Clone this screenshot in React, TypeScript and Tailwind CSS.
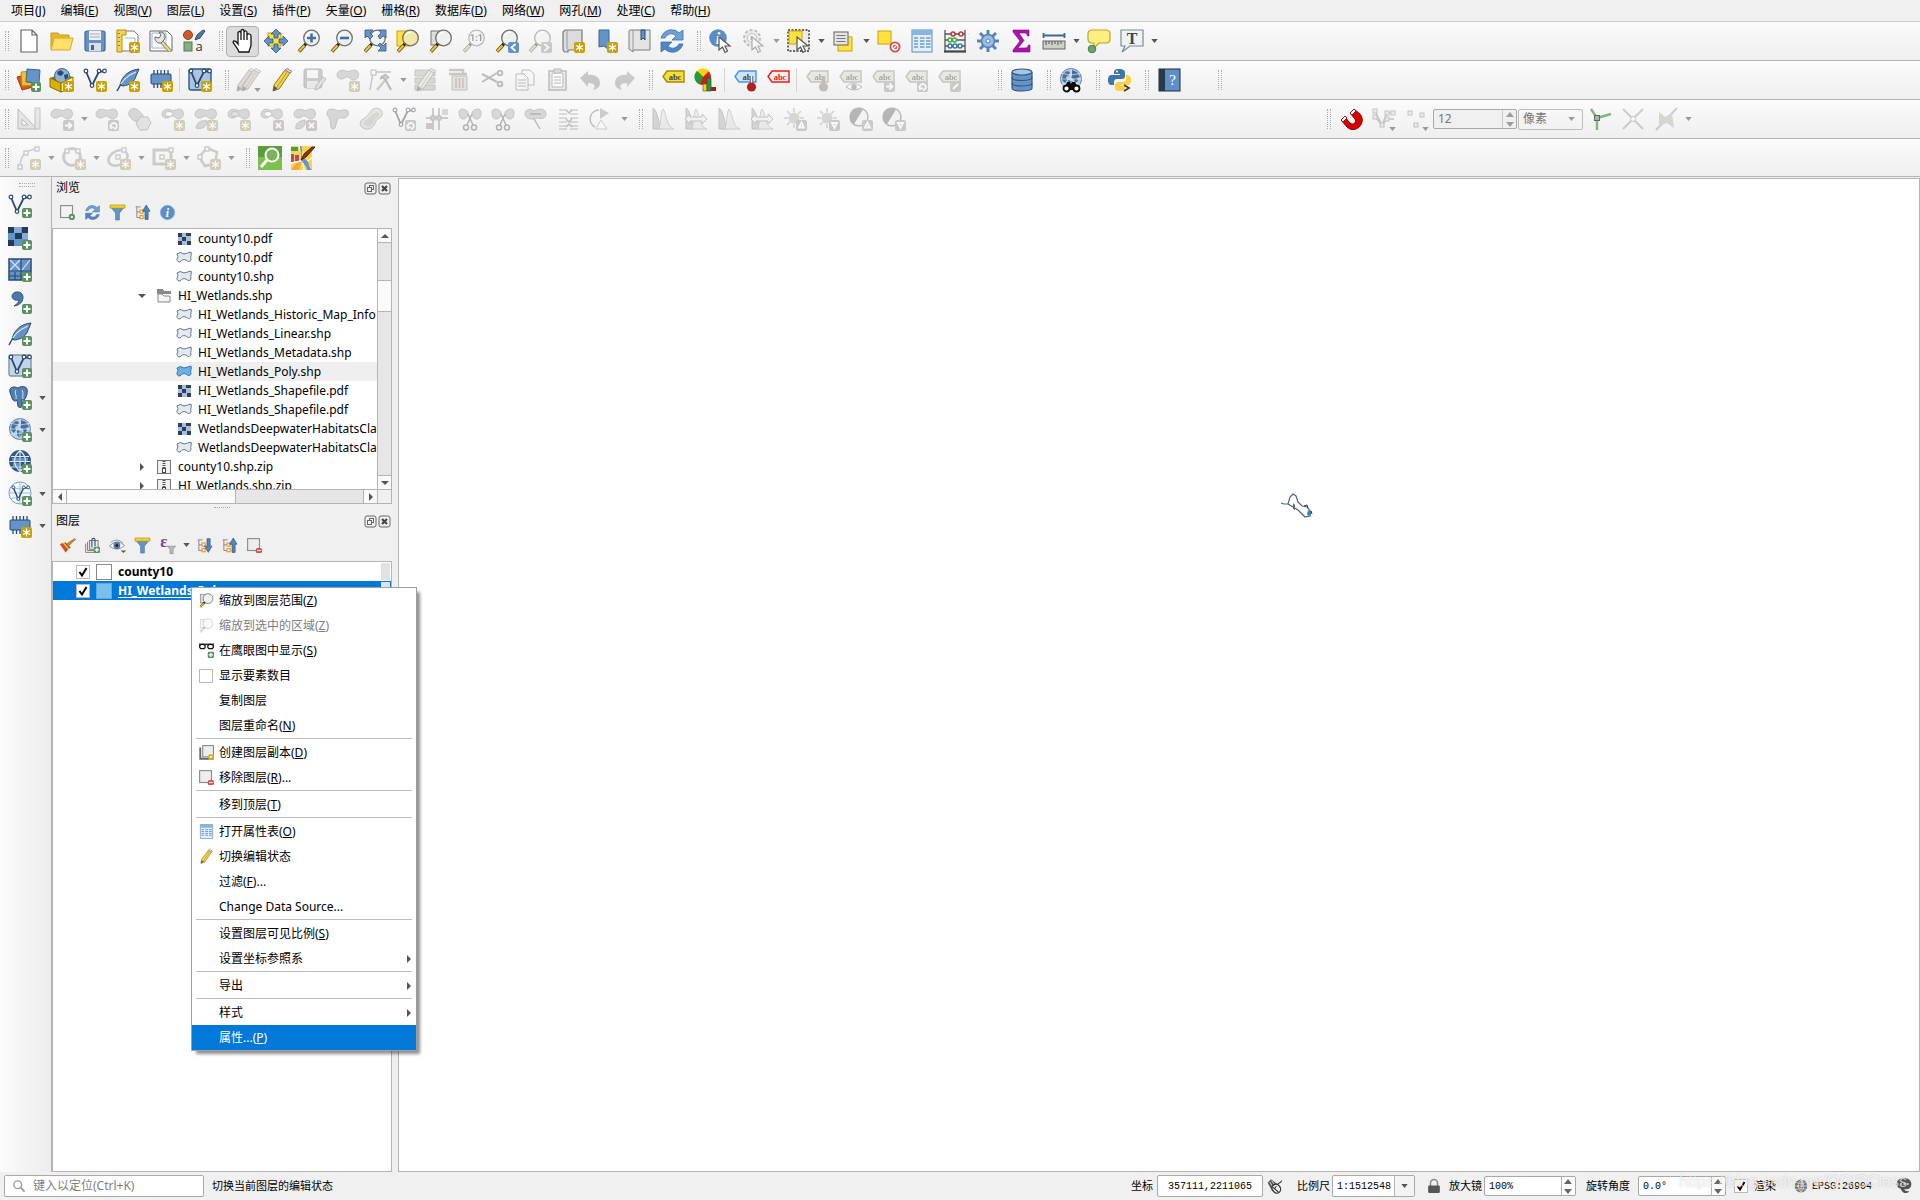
import { ReactNode } from 'react';

const BLUE = '#6493c8';
const NAVY = '#2b4a6f';

/* ---------- badges and shared icon parts, all on a 24 x 24 grid ---------- */

const Star = () => (
  <g>
    <rect x="13" y="13" width="11" height="11" rx="2" fill="#c8a208" />
    <path d="M18.5 14.5v8M15 16.5l7 4M15 20.5l7-4" stroke="#fff" strokeWidth="1.3" />
    <circle cx="18.5" cy="18.5" r="1.5" fill="#fff" />
  </g>
);

const Plus = () => (
  <g>
    <rect x="14" y="14" width="10" height="10" rx="2" fill="#5a9160" />
    <path d="M19 15.5v7M15.5 19h7" stroke="#fff" strokeWidth="2" />
  </g>
);

const Badge = ({ d, fill = '#8f9a8f' }: { d: string; fill?: string }) => (
  <g>
    <rect x="13" y="13" width="11" height="11" rx="2" fill={fill} />
    <path d={d} stroke="#fff" strokeWidth="1.8" fill="none" />
  </g>
);

const ARROW_R = 'M15 18.5h6M18.5 15.5l3 3-3 3';
const ROTATE = 'M16 20a3 3 0 1 1 3 2M15 18l1 3 3-1';
const CROSS = 'M16 16l5 5M21 16l-5 5';

const Lens = ({ fill = '#eef1ee' }: { fill?: string }) => (
  <g>
    <path d="M9.5 14L7 17" stroke="#222" strokeWidth="3" />
    <path d="M7.5 16.5L2 22.5" stroke="#6b5510" strokeWidth="3.6" />
    <path d="M7.5 16.5L2.3 22.2" stroke="#f2c53c" strokeWidth="2" />
    <circle cx="14.5" cy="9" r="7.8" fill={fill} stroke="#6d706d" strokeWidth="1.3" />
    <path d="M9.5 7a5 5 0 0 1 5-3.5" stroke="#fff" strokeWidth="1.5" fill="none" />
  </g>
);

const Cursor = () => (
  <path d="M10 8v13l3.5-3 2.5 5.500 2.500-1.500-2.500-5h5z" fill="#fff" stroke="#555" strokeWidth="1.2" />
);

const Blob = () => (
  <path d="M1 7c0-4 5-6 9-4s7-3 11 0c3 3 1 9-3 9s-3-2-6-3-3 2-6 2-5-1-5-4z" fill="#aab5aa" stroke="#7f8a7f" />
);

const VLine = () => (
  <g fill="#fff" stroke={NAVY} strokeWidth="1.2">
    <path d="M3 3.5l6 14L16 3.5h5" fill="none" strokeWidth="1.8" />
    <circle cx="3" cy="3" r="1.8" />
    <circle cx="9" cy="17.5" r="1.8" />
    <circle cx="16" cy="3" r="1.8" />
    <circle cx="21.5" cy="3" r="1.8" />
  </g>
);

const Feather = () => (
  <g>
    <path d="M23 1C13 2 6 8 4 17l3 1c7-1 12-5 13-10l3-7z" fill={BLUE} stroke={NAVY} />
    <path d="M1 23C4 15 10 8 20 4" stroke="#dfe9f4" strokeWidth="1.2" fill="none" />
    <path d="M1 23l4-7" stroke={NAVY} strokeWidth="1.5" />
  </g>
);

const Chip = () => (
  <g>
    <path d="M5 2v18M8.5 2v18M12 2v18M15.5 2v18M19 2v18" stroke={NAVY} strokeWidth="1.3" />
    <rect x="2" y="6" width="20" height="10" rx="1" fill={BLUE} stroke={NAVY} />
  </g>
);

const Globe = () => (
  <g>
    <circle cx="12" cy="11" r="10.5" fill="#b7cfe6" stroke="#5d7fa5" />
    <path
      d="M4 6l4-3 3 1-1 3-3 2 1 3-2 3-3-3zM13 2l5 2 3 5-3 1 1 3-3 2-1-4-3-1 1-3zM9 12l4 1 1 3-2 4-3-3z"
      fill="#476f9c"
    />
    <path d="M1.500 11h21M12 .5v21M3 5.5q9 3 18 0M3 16.5q9-3 18 0" stroke="#dfeaf5" strokeWidth=".7" fill="none" />
  </g>
);

const Grid = () => (
  <g>
    <circle cx="12" cy="11" r="11" fill="#31567f" />
    <path d="M4 8h7v3H4zM13 8h7v3h-7zM5 13h6v3H5z" fill={BLUE} />
    <path
      d="M12 .5v21M1.5 11.5h21M3 6.5h18M3 17h18M12 .5q-11 10 0 21M12 .5q11 10 0 21"
      stroke="#dfeaf5"
      strokeWidth="1.2"
      fill="none"
    />
  </g>
);

const PencilShape = ({ fill = '#f0d14c' }: { fill?: string }) => (
  <g>
    <path d="M15 2l5 3-11 16-6 2 1-6z" fill={fill} stroke="#8d7a1f" />
    <path d="M17.5 3.5L6.5 20" stroke="#b99a23" />
    <path d="M15 2l2-1.5 5 3L20 5z" fill="#ddd" stroke="#888" />
    <path d="M4 18l3.5 2.5L3 23z" fill="#555" />
  </g>
);

const Tag = ({ fill = '#dcd8b8', stroke = '#8c8a74', text = 'abc', color = '#444' }) => (
  <g>
    <path d="M6 3h17v11H6L2 8.5z" fill={fill} stroke={stroke} strokeWidth="1.4" />
    <text x="14" y="11.5" textAnchor="middle" fontSize="8.5" fontWeight="bold" fontFamily="Liberation Serif, serif" fill={color}>
      {text}
    </text>
  </g>
);

const Refresh = () => (
  <g>
    <path d="M1 9C3 3 8 0 13 1c3 0 5 2 6 3l4-3v10H12l4-4c-4-4-9-2-11 2z" fill="#6ea0d4" stroke="#3c71ad" strokeWidth=".8" />
    <path d="M23 15c-2 6-7 9-12 8-3 0-5-2-6-3l-4 3V13h11l-4 4c4 4 9 2 11-2z" fill="#4e86c2" stroke="#3c71ad" strokeWidth=".8" />
  </g>
);

const Raster = () => (
  <g>
    <rect x="0" y="1" width="20" height="19" fill={BLUE} />
    <path d="M0 1h6v6H0zM14 1h6v6h-6zM7 7h7v6H7zM0 14h6v6H0z" fill="#233b5b" />
    <path d="M14 7h6v6h-6zM6 1h7v6H6z" fill="#86abd6" />
  </g>
);

const Histogram = () => (
  <g>
    <path d="M2 22V1c4 2 5 12 8 21z" fill="#9fb79f" stroke="#7c8a7c" />
    <path d="M8 22c2-8 2-18 4-20 3 2 3 18 11 20z" fill="#e3dede" stroke="#a99" />
  </g>
);

const Scissors = () => (
  <g>
    <path
      d="M1 5c0-4 6-4 9 0 0 5-2 7-5 7S1 9 1 5zM23 5c0-4-6-4-9 0 0 5 2 7 5 7s4-3 4-7z"
      fill="#aab5aa"
      stroke="#7f8a7f"
    />
    <path d="M10 7l5 11M14 7L9 18" stroke="#666" strokeWidth="1.5" />
    <circle cx="8" cy="20.5" r="2.5" fill="none" stroke="#666" strokeWidth="1.5" />
    <circle cx="16" cy="20.5" r="2.5" fill="none" stroke="#666" strokeWidth="1.5" />
  </g>
);

const Tree = () => (
  <g>
    <path d="M1 3h8M3 3v17h5M3 11h5" stroke="#8a8a8a" strokeWidth="1.6" fill="none" />
    <rect x="8" y="8" width="5" height="5" fill="#fff" stroke="#f09020" strokeWidth="1.8" />
    <rect x="8" y="17" width="5" height="5" fill="#fff" stroke="#f09020" strokeWidth="1.8" />
  </g>
);

const Sun = () => (
  <g>
    <path d="M11 1v4M11 17v4M1 11h4M17 11h4M4 4l3 3M18 4l-3 3M4 18l3-3" stroke="#a8a58a" strokeWidth="1.5" />
    <circle cx="11" cy="11" r="5.5" fill="#b7b48f" />
  </g>
);

const Contrast = () => (
  <g>
    <circle cx="10" cy="10" r="9" fill="#f1f1f1" stroke="#777" strokeWidth="1.5" />
    <path d="M14 2.5A8.5 8.5 0 1 0 5 17z" fill="#666" />
  </g>
);

const icons: Record<string, ReactNode> = {
  newFile: <path d="M4 1h11l5 5v17H4zM15 1v5h5" fill="#fff" stroke="#666" strokeWidth="1.2" />,
  open: (
    <g>
      <path d="M1 20V4h7l2 2h9v4" fill="#e8b92c" stroke="#c99a1b" />
      <path d="M1 21L4 9h19l-3 12z" fill="#ffe06a" stroke="#d3a827" />
    </g>
  ),
  save: (
    <g>
      <rect x="2" y="2" width="20" height="20" rx="2" fill={BLUE} stroke="#3f6695" strokeWidth="1.2" />
      <rect x="6" y="2" width="12" height="9" fill="#eef0f2" />
      <path d="M7 5h10M7 8h10" stroke="#aaa" />
      <rect x="6" y="14" width="12" height="8" fill="#dcdfe2" />
      <rect x="8" y="16" width="3" height="5" fill="#3f6695" />
    </g>
  ),
  layout: (
    <g>
      <path d="M3 2h15l4 4v16H3z" fill="#fff" stroke="#777" />
      <path d="M1 1h9v5H6v17H1z" fill="#f3d24d" stroke="#b58f10" />
      <path d="M3 4v1M3 8v1M3 12v1M3 16v1" stroke="#8a6d00" strokeWidth="1.5" />
      <path d="M9 9h10v9" stroke="#9bb" fill="none" />
      <Star />
    </g>
  ),
  layoutManager: (
    <g>
      <path d="M1 2h17l5 5v15H1z" fill="#fff" stroke="#666" />
      <path d="M3 4h14v15H3z" fill="none" stroke="#9ab3dd" />
      <path d="M12 12l9 10" stroke="#8d8d5a" strokeWidth="4" />
      <path d="M12 12l9 10" stroke="#e6dd8c" strokeWidth="2" />
      <path d="M6 8l4 1 2-3-2-3a5 5 0 0 1 5 8l-3 3a5 5 0 0 1-6-6z" fill="#e3e3e3" stroke="#666" />
    </g>
  ),
  style: (
    <g>
      <circle cx="6" cy="6" r="4.5" fill="#cc5a2c" stroke="#9b3b17" />
      <path d="M13 11l2-5 6-5 2 1-5 7z" fill="#4e79ad" stroke="#2b4a6f" />
      <rect x="2" y="13" width="8" height="9" fill="#85ae85" stroke="#527a52" />
      <text x="17" y="22" textAnchor="middle" fontSize="13" fontFamily="Open Sans, sans-serif" fill="#333">
        a
      </text>
    </g>
  ),
  hand: (
    <path
      d="M8 23c-1-4-5-7-6-10 1-2 3-1 5 2V4c0-2 3-2 3 0V2c0-2 3-2 3 0v1c1-2 3-1 3 1v2c1-2 4-1 4 1v9c0 3-2 4-2 7zM10 4v7M13 3v8M16 5v6"
      fill="#fff"
      stroke="#111"
      strokeWidth="1.3"
    />
  ),
  pan: (
    <g>
      <rect x="4" y="4" width="13" height="13" fill="#ffe23e" stroke="#c8a208" />
      <path
        d="M12 0l5 5h-3v4h-4V5H7zM12 24l5-5h-3v-4h-4v4H7zM0 12l5-5v3h4v4H5v3zM24 12l-5-5v3h-4v4h4v3z"
        fill={BLUE}
        stroke="#31567f"
        strokeWidth=".8"
      />
    </g>
  ),
  zoomIn: (
    <g>
      <Lens />
      <path d="M14.5 4.5v9M10 9h9" stroke="#3c71ad" strokeWidth="2.6" />
    </g>
  ),
  zoomOut: (
    <g>
      <Lens />
      <path d="M10 9h9" stroke="#3c71ad" strokeWidth="2.6" />
    </g>
  ),
  zoomFull: (
    <g>
      <Lens />
      <path
        d="M2 1h8L7 4l3 3-3 3-3-3-2 2zM23 1v8l-3-2-3 3-2-3 3-3-2-3zM23 22h-8l3-3-3-3 2-2 3 3 3-3z"
        fill={BLUE}
        stroke="#31567f"
        strokeWidth=".8"
      />
    </g>
  ),
  zoomSelection: (
    <g>
      <rect x="1" y="2" width="12" height="15" fill="#ffe23e" stroke="#c8a208" />
      <Lens fill="#f1eaa6" />
    </g>
  ),
  zoomLayer: (
    <g>
      <rect x="2" y="2" width="11" height="14" fill="#ddd" stroke="#777" />
      <Lens />
    </g>
  ),
  zoomNative: (
    <g>
      <Lens />
      <text x="14.5" y="12" textAnchor="middle" fontSize="9" fontWeight="bold" fontFamily="Roboto, sans-serif" fill="#333">
        1:1
      </text>
    </g>
  ),
  zoomLast: (
    <g>
      <Lens />
      <Badge fill={BLUE} d="M20.5 15l-4 3.5 4 3.5" />
    </g>
  ),
  zoomNext: (
    <g>
      <Lens />
      <Badge d="M16.5 15l4 3.5-4 3.5" />
    </g>
  ),
  mapView: (
    <g>
      <path d="M4 1h17v20H7v2H4a3 3 0 0 1-2-3V3z" fill="#dcdcdc" stroke="#7a7a7a" strokeWidth="1.2" />
      <path d="M6 1v19" stroke="#999" />
      <Star />
    </g>
  ),
  bookmarkNew: (
    <g>
      <path d="M5 1h10v20l-5-4-5 1z" fill={BLUE} stroke="#3f6695" />
      <Star />
    </g>
  ),
  bookmarks: (
    <g>
      <path d="M3 1h20v20H6v2L2 20V2z" fill="#e4e4e4" stroke="#7a7a7a" />
      <path d="M6 1v20" stroke="#999" />
      <path d="M14 1h4v10l-2-2-2 2z" fill={BLUE} stroke={NAVY} />
    </g>
  ),
  refresh: <Refresh />,
  identify: (
    <g>
      <circle cx="9" cy="9" r="8.8" fill="#5c8ec6" />
      <text x="9" y="14.5" textAnchor="middle" fontSize="16" fontStyle="italic" fontWeight="bold" fontFamily="Liberation Serif, serif" fill="#fff">
        i
      </text>
      <Cursor />
    </g>
  ),
  action: (
    <g>
      <circle cx="10" cy="9" r="8" fill="#ddd" stroke="#777" strokeWidth="2" strokeDasharray="3 2" />
      <circle cx="10" cy="9" r="4.5" fill="#fff" stroke="#777" />
      <path d="M8.5 6.5l4 2.5-4 2.5z" fill="#666" />
      <Cursor />
    </g>
  ),
  select: (
    <g>
      <rect x="1" y="1" width="21" height="21" fill="#ececec" stroke="#333" strokeWidth="1.4" strokeDasharray="2 1.5" />
      <rect x="2" y="2" width="13" height="13" fill="#ffe23e" stroke="#c8a208" />
      <Cursor />
    </g>
  ),
  selectForm: (
    <g>
      <rect x="6" y="8" width="14" height="14" fill="#ffe23e" stroke="#c8a208" />
      <rect x="2" y="3" width="14" height="13" fill="#e5e5e5" stroke="#777" strokeWidth="1.2" />
      <path d="M4.5 6.5h9M4.5 9.5h9M4.5 12.5h9" stroke="#777" strokeWidth="1.2" />
    </g>
  ),
  deselect: (
    <g>
      <rect x="1" y="2" width="13" height="13" fill="#ffe23e" stroke="#c8a208" />
      <circle cx="18" cy="18" r="5.5" fill="#d84b4b" />
      <circle cx="18" cy="18" r="3" fill="none" stroke="#fff" strokeWidth="1.3" />
      <path d="M16 20l4-4" stroke="#fff" strokeWidth="1.3" />
    </g>
  ),
  table: (
    <g>
      <rect x="2" y="1" width="20" height="22" fill="#e3eefa" stroke="#6f9dcc" strokeWidth="1.2" />
      <rect x="2" y="1" width="20" height="5" fill="#8ab4e0" />
      <path
        d="M4 9h4M10 9h4.5M16 9h4.5M4 12h4M10 12h4.5M16 12h4.5M4 15h4M10 15h4.5M16 15h4.5M4 18h4M10 18h4.5M16 18h4.500"
        stroke="#6f9dcc"
        strokeWidth="1.6"
      />
    </g>
  ),
  abacus: (
    <g>
      <path d="M2 1v21M22 1v21M1 22.5h22M2 5h20M2 11h20M2 17h20" stroke="#555" strokeWidth="1.3" />
      <path d="M1 22.5h22" stroke="#444" strokeWidth="2" />
      <g fill="#fff" strokeWidth="1.5">
        <circle cx="10" cy="5" r="2" stroke="#c33" />
        <circle cx="18" cy="5" r="2" stroke="#c33" />
        <circle cx="7" cy="11" r="2" stroke="#4a4" />
        <circle cx="11.5" cy="11" r="2" stroke="#4a4" />
        <circle cx="7" cy="17" r="2" stroke="#37a" />
        <circle cx="12" cy="17" r="2" stroke="#37a" />
        <circle cx="17" cy="17" r="2" stroke="#37a" />
      </g>
    </g>
  ),
  gear: (
    <g stroke="#5583b9" fill="none">
      <path d="M12 1v22M1 12h22M4 4l16 16M20 4L4 20" strokeWidth="3" />
      <circle cx="12" cy="12" r="6.5" fill="#9dbde2" strokeWidth="1.6" />
      <circle cx="12" cy="12" r="2" fill="#fff" />
    </g>
  ),
  sigma: (
    <path
      d="M4 1h16v6h-1.5C18 4.5 17 4 15 4h-5l5 7.5L9 19h7c2 0 3-1 3.5-3H21v7H4v-2l7-9-7-9z"
      fill="#b010b0"
      stroke="#7d0a7d"
      strokeWidth=".6"
    />
  ),
  ruler: (
    <g>
      <path d="M1 6.5h22M1.5 4v5M22.5 4v5" stroke="#3f6695" strokeWidth="1.8" />
      <rect x="1" y="12" width="22" height="8" fill="#cfcfc6" stroke="#666" />
      <path d="M4 12v4M7 12v3M10 12v4M13 12v3M16 12v4M19 12v3" stroke="#555" />
    </g>
  ),
  tip: (
    <g>
      <path d="M5 1h14q4 0 4 4v5q0 4-4 4h-7l-5 5V14H5q-4 0-4-4V5q0-4 4-4z" fill="#ffef83" stroke="#c2a327" strokeWidth="1.2" />
      <circle cx="5" cy="20" r="3.800" fill="#6ca36c" stroke="#477a47" />
    </g>
  ),
  annotation: (
    <g>
      <path d="M1 1h22v16H10l-8 6 3-6H1z" fill="#eef4f6" stroke="#7a8a92" strokeWidth="1.2" />
      <text x="12" y="14.5" textAnchor="middle" fontSize="16" fontWeight="bold" fontFamily="Liberation Serif, serif" fill="#444">
        T
      </text>
    </g>
  ),
  addLayer: (
    <g>
      <path d="M0 9l12-3 4 13-11 3z" fill="#d4572a" stroke="#9b3b17" />
      <path d="M4 4l13-1v14L5 18z" fill="#f2c020" stroke="#b98a10" />
      <path d="M10 1l13 1-1 13-13-1z" fill={BLUE} stroke="#3f6695" />
      <Plus />
    </g>
  ),
  geopackage: (
    <g>
      <path d="M0 10l11-4 12 3-12 6z" fill="#8a6d00" />
      <circle cx="12" cy="8" r="7.5" fill="#8fb2d8" stroke="#3f6695" />
      <path d="M7 4l4-2 3 3-3 3-3-1zM14 7l4-1v4l-3 2z" fill={NAVY} />
      <path d="M0 10l11 5v9L0 19z" fill="#d9b000" stroke="#8a6d00" />
      <path d="M11 15l12-6v10l-12 5z" fill="#fff06b" stroke="#8a6d00" />
      <Star />
    </g>
  ),
  newShape: (
    <g>
      <VLine />
      <Star />
    </g>
  ),
  newSpatialite: (
    <g>
      <Feather />
      <Star />
    </g>
  ),
  newMemory: (
    <g>
      <Chip />
      <Star />
    </g>
  ),
  newVirtual: (
    <g>
      <rect x="1" y="1" width="22" height="21" rx="2" fill="#a9c5e3" stroke="#31567f" strokeWidth="1.4" />
      <VLine />
      <Star />
    </g>
  ),
  pencils: (
    <g>
      <g transform="translate(-3 0)">
        <PencilShape fill="#c9b8b8" />
      </g>
      <g transform="translate(2 0)">
        <PencilShape fill="#c9b8b8" />
      </g>
    </g>
  ),
  pencil: <PencilShape />,
  saveEdits: (
    <g>
      <rect x="1" y="1" width="18" height="19" rx="2" fill="#999" stroke="#777" />
      <rect x="4" y="2" width="11" height="8" fill="#f5f5f5" />
      <rect x="4" y="13" width="11" height="7" fill="#ddd" />
      <path d="M20 9l3 2-8 10-3 1 1-4z" fill="#ccc" stroke="#777" />
    </g>
  ),
  addFeature: (
    <g>
      <Blob />
      <Star />
    </g>
  ),
  vertex: (
    <g>
      <path d="M4 5L1 22M7 4h15" stroke="#888" strokeWidth="1.4" />
      <rect x="2" y="2" width="5" height="5" fill="#fff" stroke="#777" />
      <path d="M8 22L18 10" stroke="#a39c6a" strokeWidth="2.5" />
      <path d="M12 8l4 3 6 11M11 11l5-4 4 3" stroke="#777" strokeWidth="2.2" fill="none" />
    </g>
  ),
  multiEdit: (
    <g>
      <path d="M1 2h20v6H1zM1 10h20v5H1zM1 17h20v5H1z" fill="#b9b98f" stroke="#888" />
      <PencilShape fill="#ddd" />
    </g>
  ),
  trash: (
    <g>
      <path d="M2 2h14v3M2 6h18" stroke="#a88" strokeWidth="2.5" fill="none" />
      <path d="M5 8h15v14H5z" fill="#dcc8c8" stroke="#a77" />
      <path d="M9 10v10M12.5 10v10M16 10v10" stroke="#a77" strokeWidth="1.5" />
    </g>
  ),
  cut: (
    <g stroke="#777" fill="none" strokeWidth="2">
      <path d="M2 6l15 8M2 14l15-9" />
      <circle cx="20" cy="5" r="2.3" />
      <circle cx="20" cy="16" r="2.3" />
    </g>
  ),
  copy: (
    <g fill="#f7f7f7" stroke="#777">
      <path d="M9 2h8l4 4v11H9z" />
      <path d="M3 6h8l4 4v12H3z" />
      <path d="M5 12h8M5 15h8M5 18h8" />
    </g>
  ),
  paste: (
    <g fill="#e3e3d4" stroke="#777">
      <rect x="3" y="3" width="17" height="19" strokeWidth="1.5" />
      <path d="M6 5h11v14H6z" fill="#fff" />
      <rect x="8" y="1" width="7" height="4" fill="#bbb" />
      <path d="M8 9h7M8 12h7M8 15h7" />
    </g>
  ),
  undo: <path d="M1 10l8-7v4c8-1 12 3 12 8 0 4-3 6-7 7 3-4 2-7-5-7v4z" fill="#9a8f86" />,
  redo: <path d="M23 10l-8-7v4C7 6 3 10 3 15c0 4 3 6 7 7-3-4-2-7 5-7v4z" fill="#8f968f" />,
  label: <Tag fill="#f6dc3c" stroke="#a68a00" />,
  diagram: (
    <g>
      <circle cx="9" cy="9" r="8" fill="#d01c1c" />
      <path d="M9 9L3 3a8 8 0 0 1 12 0z" fill="#ffd400" />
      <path d="M9 9L3 3a8 8 0 0 0 3 13.5z" fill="#1f9a3c" />
      <path d="M9 16h4v7H9z" fill="#ffd400" stroke="#654" strokeWidth=".7" />
      <path d="M13 10h4v13h-4z" fill="#1f9a3c" stroke="#253" strokeWidth=".7" />
      <path d="M17 19h5v4h-5z" fill="#c01616" />
    </g>
  ),
  labelPin: (
    <g>
      <Tag fill="#cfe3fb" stroke="#4b93e8" text="ab" />
      <path d="M18.5 8v10" stroke="#4a6076" strokeWidth="3.5" />
      <path d="M18.5 8v10" stroke="#fff" strokeWidth="1.5" />
      <circle cx="18.5" cy="19" r="4.6" fill="#b32020" />
    </g>
  ),
  labelRed: <Tag fill="#fff0f0" stroke="#f01818" color="#e02020" />,
  labelPinOff: (
    <g>
      <Tag text="ab" />
      <path d="M18.5 8v10" stroke="#777" strokeWidth="3.5" />
      <circle cx="18.5" cy="19" r="4.6" fill="#957676" />
    </g>
  ),
  labelShow: (
    <g>
      <Tag />
      <path d="M8 19q7-7 16 0-8 6-16 0z" fill="#fff" stroke="#777" />
      <circle cx="16" cy="19" r="2.7" fill="#777" />
    </g>
  ),
  labelMove: (
    <g>
      <Tag />
      <Badge d={ARROW_R} />
    </g>
  ),
  labelRotate: (
    <g>
      <Tag />
      <Badge d={ROTATE} />
    </g>
  ),
  labelChange: (
    <g>
      <Tag />
      <Badge d="M16 21l5-5" />
    </g>
  ),
  database: (
    <g fill={BLUE} stroke="#31567f" strokeWidth="1.2">
      <path d="M2 4v16c0 4 20 4 20 0V4" />
      <ellipse cx="12" cy="4" rx="10" ry="3" fill="#a9c5e3" />
      <path d="M2 9.5c0 4 20 4 20 0M2 15c0 4 20 4 20 0" fill="none" />
    </g>
  ),
  metasearch: (
    <g>
      <Globe />
      <path d="M5 22l3-8h3l1 2 1-2h3l4 8z" fill="#0a0a0a" />
      <circle cx="7.5" cy="20.5" r="3" fill="#fff" stroke="#0a0a0a" strokeWidth="1.8" />
      <circle cx="17.5" cy="20.5" r="3" fill="#fff" stroke="#0a0a0a" strokeWidth="1.8" />
    </g>
  ),
  python: (
    <g>
      <path
        d="M11 1c-5 0-5 2-5 5h6v1H4c-3 0-4 2-4 5s1 5 4 5h2v-3c0-2 1-3 3-3h5c2 0 3-1 3-3V5c0-3-2-4-6-4z"
        fill="#3f76a8"
      />
      <path
        d="M18 7v4c0 2-1 3-3 3h-5c-2 0-3 1-3 3v3c0 3 2 3 5 3s5-1 5-3v-2h-5v-1h7c3 0 4-2 4-5s-1-5-5-5z"
        fill="#ffd040"
      />
      <circle cx="9" cy="3.500" r="1" fill="#fff" />
      <path d="M16 17l5 3-5 3" stroke="#333" strokeWidth="1.6" fill="none" />
    </g>
  ),
  help: (
    <g>
      <rect x="2" y="1" width="21" height="22" fill="#5f8fc6" stroke="#1e2c3d" />
      <rect x="2" y="1" width="6" height="22" fill="#27394f" />
      <text x="15.5" y="17" textAnchor="middle" fontSize="15" fontFamily="Liberation Serif, serif" fill="#fff">
        ?
      </text>
    </g>
  ),
  triangle: (
    <g>
      <path d="M1 2v20h19z" fill="#d9d0cc" stroke="#777" />
      <path d="M5 12v6h6z" fill="#fff" stroke="#777" />
      <rect x="18" y="1" width="5" height="21" fill="#ddd6b8" stroke="#888" />
    </g>
  ),
  moveFeature: (
    <g>
      <Blob />
      <Badge d={ARROW_R} />
    </g>
  ),
  rotateFeature: (
    <g>
      <Blob />
      <Badge d={ROTATE} />
    </g>
  ),
  simplify: (
    <g>
      <path d="M1 5c2-5 8-4 10-1s4 2 4 6-7 6-10 3-5-4-4-8z" fill="#aab5aa" stroke="#7f8a7f" />
      <path d="M12 10h8l3 6-4 7h-7l-4-6z" fill="#c6d0cf" stroke="#7f8a7f" />
    </g>
  ),
  addRing: (
    <g>
      <Blob />
      <ellipse cx="8" cy="7" rx="4" ry="2.5" fill="#fff" stroke="#7f8a7f" />
      <Star />
    </g>
  ),
  addPart: (
    <g>
      <Blob />
      <path d="M2 21c1-7 7-8 11-7 0 5-4 9-11 7z" fill="#aab5aa" stroke="#7f8a7f" />
      <Star />
    </g>
  ),
  fillRing: (
    <g>
      <Blob />
      <ellipse cx="8" cy="7" rx="4" ry="2.5" fill="#c7cfae" stroke="#7f8a7f" />
      <Star />
    </g>
  ),
  deleteRing: (
    <g>
      <Blob />
      <ellipse cx="8" cy="7" rx="4" ry="2.5" fill="#fff" stroke="#7f8a7f" />
      <Badge fill="#ad8f8f" d={CROSS} />
    </g>
  ),
  deletePart: (
    <g>
      <Blob />
      <path d="M3 22c-1-5 2-8 9-9 1 5-2 9-9 9z" fill="#aab5aa" stroke="#7f8a7f" />
      <Badge fill="#ad8f8f" d={CROSS} />
    </g>
  ),
  reshape: (
    <path
      d="M1 6c0-4 5-5 9-3s9-2 12 1c2 4-2 8-6 7-3-1-4 1-5 3s-1 8-4 8-2-5-3-9-3-3-3-7z"
      fill="#aab5a5"
      stroke="#7f8a7f"
    />
  ),
  offset: (
    <g>
      <path d="M13 3c4-4 12-1 10 5-1 4-5 3-6 6s-4 9-10 8-8-7-3-10 6-6 9-9z" fill="#cfcfb0" stroke="#7f8a7f" />
      <path d="M15 6c3-2 6 0 5 2-1 3-4 3-5 6s-4 6-7 5-4-4-1-6 5-4 8-7z" fill="#aab5aa" />
    </g>
  ),
  offsetCurve: (
    <g>
      <VLine />
      <Badge d={ROTATE} />
    </g>
  ),
  split: (
    <g stroke="#777">
      <path d="M8 1v22M14 1v22M1 11h22" strokeWidth="1.5" />
      <rect x="6" y="9" width="4" height="4" fill="#aaa" />
      <rect x="12" y="9" width="4" height="4" fill="#aaa" />
      <rect x="17" y="2" width="6" height="6" fill="#b9b47c" stroke="none" />
      <rect x="1" y="16" width="6" height="6" fill="#b98c8c" stroke="none" />
    </g>
  ),
  splitParts: <Scissors />,
  merge: (
    <g>
      <path d="M1 7c0-5 6-6 9-3 3-3 12-3 12 3 0 5-6 5-8 4-3 1-12 3-13-4z" fill="#aab5aa" stroke="#7f8a7f" />
      <path d="M6 7h11M10 12l6 10" stroke="#666" strokeWidth="1.3" />
    </g>
  ),
  mergeAttributes: (
    <g stroke="#777" fill="none">
      <path d="M2 3h20M2 7h20M2 11h20M2 15h20M2 19h20M2 22h20" strokeDasharray="8 3" />
      <path d="M9 3l3 3 3-3M9 12l3 3 3-3M9 20l3-3 3 3" strokeWidth="1.5" />
    </g>
  ),
  rotateSymbol: (
    <g>
      <path d="M5 20A9 9 0 0 1 9 3" stroke="#777" strokeWidth="1.5" fill="none" />
      <path d="M10 1l9 5-9 6z" fill="#999" />
      <path d="M6 22l5-9 6 9z" fill="#fff" stroke="#999" />
    </g>
  ),
  histogram: <Histogram />,
  histogramStretch: (
    <g>
      <Histogram />
      <path d="M1 12l5-5v3h12V7l5 5-5 5v-3H6v3z" fill="#eee" stroke="#888" />
    </g>
  ),
  brighten: (
    <g>
      <Sun />
      <Badge d="M16 20.5l2.5-5 2.5 5z" />
    </g>
  ),
  darken: (
    <g>
      <Sun />
      <Badge d="M16 16l2.5 5 2.5-5z" />
    </g>
  ),
  contrastUp: (
    <g>
      <Contrast />
      <Badge d="M16 20.5l2.5-5 2.5 5z" />
    </g>
  ),
  contrastDown: (
    <g>
      <Contrast />
      <Badge d="M16 16l2.5 5 2.5-5z" />
    </g>
  ),
  magnet: (
    <g>
      <path
        d="M2 13l6 7c4 4 10 3 13-1s3-8 0-12L15 2l-4 4 5 6c2 3-2 7-5 4l-5-6z"
        fill="#d40000"
        stroke="#8d0000"
      />
      <path d="M2 13l4-4 2 2-4 4zM15 2l-4 4 2 2 4-4z" fill="#fff" stroke="#a11" />
    </g>
  ),
  snapVertex: (
    <g stroke="#888" fill="#ddd">
      <path d="M3 4l7 14L15 6h7M3 10l7 8 5-6h7" fill="none" strokeWidth="1.5" />
      <rect x="1" y="2" width="4" height="4" />
      <rect x="1" y="8" width="4" height="4" />
      <rect x="8" y="16" width="4" height="4" />
      <rect x="13" y="4" width="4" height="4" />
      <rect x="19" y="4" width="4" height="4" />
      <rect x="13" y="10" width="4" height="4" />
    </g>
  ),
  snapPoints: (
    <g stroke="#888" fill="#ddd">
      <rect x="3" y="4" width="4" height="4" />
      <rect x="15" y="6" width="4" height="4" />
      <rect x="9" y="16" width="4" height="4" />
    </g>
  ),
  topology: (
    <g>
      <path d="M3 2l6 9 14-4M9 11v12" stroke="#7db87d" strokeWidth="2.4" fill="none" />
      <rect x="6.5" y="8.5" width="5" height="5" fill="#a9b5a9" stroke="#666" />
    </g>
  ),
  intersection: (
    <g>
      <path d="M2 2l20 20M22 2L2 22" stroke="#999" strokeWidth="2" />
      <circle cx="12" cy="12" r="2.5" fill="#fff" stroke="#999" />
    </g>
  ),
  tracing: (
    <g>
      <path d="M23 1L2 23" stroke="#999" strokeWidth="2" />
      <path d="M5 5l6 5 7-4 2 15-7-5-8 3z" fill="#b7b08a" />
    </g>
  ),
  curve: (
    <g fill="none" stroke="#999" strokeWidth="1.5">
      <path d="M3 21C3 10 8 4 20 3" />
      <rect x="1" y="19" width="4" height="4" fill="#fff" />
      <rect x="7" y="5" width="4" height="4" fill="#fff" />
      <rect x="18" y="1" width="4" height="4" fill="#fff" />
    </g>
  ),
  circleShape: (
    <g fill="none" stroke="#999" strokeWidth="1.5">
      <circle cx="10" cy="11" r="8.5" strokeWidth="3" />
      <rect x="3" y="3" width="4" height="4" fill="#fff" />
      <rect x="14" y="3" width="4" height="4" fill="#fff" />
    </g>
  ),
  ellipseShape: (
    <g fill="none" stroke="#999" strokeWidth="1.5">
      <ellipse cx="11" cy="12" rx="10" ry="7" transform="rotate(-25 11 12)" strokeWidth="2.5" />
      <rect x="9" y="9" width="4" height="4" fill="#fff" />
      <rect x="15" y="2" width="4" height="4" fill="#fff" />
    </g>
  ),
  rectShape: (
    <g fill="none" stroke="#999" strokeWidth="1.5">
      <rect x="2" y="4" width="17" height="14" strokeWidth="3" />
      <rect x="8" y="9" width="4" height="4" fill="#fff" />
      <rect x="17" y="2" width="4" height="4" fill="#fff" />
    </g>
  ),
  polygonShape: (
    <g fill="none" stroke="#999" strokeWidth="1.5">
      <path d="M10 2l10 4-2 12-10 2-6-9z" strokeWidth="2.5" />
      <rect x="8" y="1" width="4" height="4" fill="#fff" />
      <rect x="1" y="9" width="4" height="4" fill="#fff" />
    </g>
  ),
  searchGreen: (
    <g>
      <rect x="0" y="0" width="24" height="24" fill="#7cc04e" />
      <rect x="0" y="0" width="24" height="11" fill="#5a9e3c" />
      <path d="M3 21l6-7" stroke="#fff" strokeWidth="3" />
      <circle cx="14" cy="9" r="6.5" fill="#79b45a" stroke="#fff" strokeWidth="2" />
    </g>
  ),
  osm: (
    <g>
      <rect x="0" y="0" width="21" height="24" fill="#fcd34a" />
      <path d="M0 1h7v4H0z" fill="#3fa34c" />
      <path d="M0 8h3v8H0zM4 9h4v6H4z" fill="#b04a72" />
      <path d="M0 24l5-7 6-3-3 10z" fill="#f6a93a" />
      <path d="M8 0l3 9 2 15M0 17l10-2M12 18l9-6" stroke="#fff" strokeWidth="1.4" fill="none" />
      <path d="M10 0c3 5-2 9 4 13s2 7 7 11h-5c0-5-6-7-6-13s-1-7-1-11z" fill="#5c95dd" />
      <path d="M24 1l-9 10-5 3 3-6 8-7z" fill="#8a3c10" stroke="#4d1f05" />
    </g>
  ),
  dsVector: (
    <g>
      <VLine />
      <Plus />
    </g>
  ),
  dsRaster: (
    <g>
      <Raster />
      <Plus />
    </g>
  ),
  dsMesh: (
    <g>
      <rect x="1" y="1" width="22" height="21" fill={BLUE} stroke={NAVY} strokeWidth="1.5" />
      <path d="M1 13h22M13 1v21M7 14v8M1 18h12" stroke={NAVY} strokeWidth="1.2" />
      <path d="M2 2l10 10M12 2L2 12M14 12l8-10" stroke="#d5e3f2" strokeWidth="1.2" />
      <Plus />
    </g>
  ),
  dsText: (
    <g>
      <path d="M9 2a5 5 0 0 1 6 5c0 5-3 8-9 9 3-2 5-4 5-6-4 1-7-1-7-4 0-2 2-4 5-4z" fill="#4e79ad" stroke="#31567f" />
      <Plus />
    </g>
  ),
  dsSpatialite: (
    <g>
      <Feather />
      <Plus />
    </g>
  ),
  dsVirtual: (
    <g>
      <rect x="1" y="1" width="22" height="21" rx="2" fill="#c2d5ea" stroke="#7f93aa" strokeWidth="1.4" />
      <VLine />
      <Plus />
    </g>
  ),
  dsPostgres: (
    <g>
      <path
        d="M2 3c2-3 6-2 8-1 3-2 8-2 9 1 1 4-1 9-3 11-1-1-2-1-2 0v6c0 2-4 2-4 0l-1-6c-2 2-4 1-5-2S1 5 2 3z"
        fill="#4f7fb5"
        stroke={NAVY}
      />
      <path d="M8 4c-2 3 1 5 0 9M14 4c2 3 0 6 1 9" stroke="#dce8f4" fill="none" />
      <Plus />
    </g>
  ),
  dsWms: (
    <g>
      <Globe />
      <Plus />
    </g>
  ),
  dsWcs: (
    <g>
      <Grid />
      <Plus />
    </g>
  ),
  dsWfs: (
    <g>
      <circle cx="12" cy="11" r="11" fill="#f4f8fc" stroke="#6f9dcc" />
      <path d="M1.5 11h21M12 .5v21M3 5.5q9 3 18 0M3 16.5q9-3 18 0" stroke="#9dbde2" fill="none" />
      <g transform="translate(3 3) scale(.8)">
        <VLine />
      </g>
      <Plus />
    </g>
  ),
  addSmall: (
    <g>
      <rect x="1" y="1" width="19" height="19" fill="#f4f4f4" stroke="#8a8a8a" strokeWidth="1.8" />
      <circle cx="19" cy="19" r="5" fill="#5a9160" />
      <circle cx="19" cy="19" r="2" fill="#d7efd9" />
    </g>
  ),
  filter: (
    <g>
      <path d="M1 3h22l-8 10v11H9V13z" fill={BLUE} stroke="#44709f" />
      <path d="M0 0h24v5H0z" fill="#f3d62f" stroke="#a48c10" />
    </g>
  ),
  collapse: (
    <g>
      <Tree />
      <path d="M16 23V10h-4l6-10 6 10h-3v13z" fill="#4e86c2" stroke={NAVY} />
    </g>
  ),
  expand: (
    <g>
      <Tree />
      <path d="M16 1v12h-4l6 10 6-10h-3V1z" fill="#4e86c2" stroke={NAVY} />
    </g>
  ),
  info: (
    <g>
      <circle cx="12" cy="12" r="11.5" fill="#5c8ec6" stroke="#8aaed6" />
      <text x="12" y="18.5" textAnchor="middle" fontSize="19" fontStyle="italic" fontWeight="bold" fontFamily="Liberation Serif, serif" fill="#fff">
        i
      </text>
    </g>
  ),
  brush: (
    <g>
      <path d="M25 2L13 13l-3-3L23 1z" fill="#d18a3a" stroke="#96571a" />
      <path d="M0 10l8-4 9 9-8 8z" fill="#f2cc4a" />
      <path d="M0 10l4-2 9 10-4 5z" fill="#cf4a3d" />
      <path d="M9 7l8 8-2 2-8-9z" fill="#a0571b" />
    </g>
  ),
  addGroup: (
    <g>
      <path d="M1 9v14h14M4 6v14h14" stroke="#7c7c7c" strokeWidth="1.5" fill="none" />
      <rect x="7" y="4" width="14" height="14" fill="#eee" stroke="#777" strokeWidth="1.5" />
      <path d="M11 15V3a2.5 2.5 0 0 1 5 0v10" fill="none" stroke="#31567f" strokeWidth="1.8" />
      <Plus />
    </g>
  ),
  eye: (
    <g>
      <path d="M-1 13Q11 0 23 12 12 23-1 13z" fill="#fff" stroke="#888" strokeWidth="1.5" />
      <circle cx="11" cy="12" r="5.500" fill="#4e79ad" />
      <circle cx="11" cy="12" r="2" fill="#111" />
      <path d="M1 7Q11-1 21 8" stroke="#999" fill="none" strokeWidth="1.5" />
      <path d="M17 20h9l-4.5 4z" fill="#555" />
    </g>
  ),
  epsilon: (
    <g>
      <text x="6" y="15" textAnchor="middle" fontSize="27" fontWeight="bold" fontFamily="Liberation Serif, serif" fill="#7b4a82">
        ε
      </text>
      <path d="M12 13h13l-4 5v7h-5v-7z" fill="#bbb" stroke="#888" />
    </g>
  ),
  removeLayer: (
    <g>
      <rect x="1" y="1" width="19" height="19" fill="#eee" stroke="#8a8a8a" strokeWidth="1.8" />
      <rect x="14" y="16" width="10" height="8" rx="3" fill="#e04848" />
      <path d="M16 20h6" stroke="#fff" strokeWidth="2" />
    </g>
  ),
  glasses: (
    <g>
      <path d="M0 2h24" stroke="#111" strokeWidth="2" />
      <rect x="1" y="2" width="9" height="7" rx="3.500" fill="#fff" stroke="#111" strokeWidth="2" />
      <rect x="14" y="2" width="9" height="7" rx="3.500" fill="#fff" stroke="#111" strokeWidth="2" />
      <Plus />
    </g>
  ),
  duplicate: (
    <g>
      <path d="M2 4v18h14" fill="none" stroke="#666" strokeWidth="3" />
      <rect x="6" y="1" width="17" height="18" fill="#eee" stroke="#777" strokeWidth="1.5" />
      <rect x="15" y="15" width="9" height="9" rx="1" fill="#d3aa18" />
      <path d="M17 19h4" stroke="#fff" strokeWidth="2.5" />
    </g>
  ),
  extents: (
    <g>
      <path d="M1 7l5-5 11 8-9 10z" fill="#555" />
      <path d="M4 6l8 12M7 4l9 12" stroke="#eee" strokeWidth="1.3" />
      <ellipse cx="14" cy="16" rx="6" ry="7" transform="rotate(-35 14 16)" fill="#eee" stroke="#333" strokeWidth="2" />
      <path d="M9 14l8 7M14 12l-3 5" stroke="#333" strokeWidth="1.6" />
      <path d="M16 10c1-4 4-1 6-6" stroke="#333" strokeWidth="1.6" fill="none" />
    </g>
  ),
  lock: (
    <g>
      <path d="M6 12V7a6 6 0 0 1 12 0v5" fill="none" stroke="#888" strokeWidth="2.5" />
      <rect x="2" y="11" width="20" height="13" rx="2" fill="#555" />
    </g>
  ),
  globeGray: (
    <g>
      <circle cx="12" cy="12" r="11" fill="#777" />
      <path
        d="M12 1v22M1 12h22M3 6q9 4 18 0M3 18q9-4 18 0M12 1q-10 11 0 22M12 1q10 11 0 22"
        stroke="#ececec"
        fill="none"
        strokeWidth="1"
      />
    </g>
  ),
  chat: (
    <g>
      <path d="M1 9c0-12 22-12 22 0 0 6-4 8-8 8h-3c2 3 6 3 8 3-3 4-10 4-13-4C3 15 1 13 1 9z" fill="#555" />
      <path d="M6 9h3M11 9h3M16 9h3" stroke="#eee" strokeWidth="2.5" />
    </g>
  ),
};

['curve', 'circleShape', 'ellipseShape', 'rectShape', 'polygonShape'].forEach((key) => {
  icons[key] = (
    <g>
      {icons[key]}
      <Star />
    </g>
  );
});

interface IconProps {
  name: string;
  className?: string;
}

const Icon = ({ name, className = 'size-6' }: IconProps) => (
  <svg viewBox="0 0 24 24" className={`${className} shrink-0 overflow-visible`} aria-hidden="true">
    {icons[name]}
  </svg>
);

const Caret = ({ className = 'text-[#555]' }: { className?: string }) => (
  <svg viewBox="0 0 8 5" className={`h-1 w-[7px] shrink-0 ${className}`} aria-hidden="true">
    <path d="M0 0h8L4 5z" fill="currentColor" />
  </svg>
);

/* Underlines the access key that stands in brackets after a label */
const Mnemonic = ({ label }: { label: string }) => {
  const match = label.match(/^(.*\()([A-Z])(\).*)$/);
  if (!match) return <>{label}</>;
  return (
    <>
      {match[1]}
      <u className="underline-offset-1">{match[2]}</u>
      {match[3]}
    </>
  );
};

/* ---------- toolbars ---------- */

const Handle = () => (
  <span className="flex h-5 w-3 shrink-0 justify-center gap-[2px] pl-[2px]">
    <span className="w-0 border-l border-dotted border-[#aaa]" />
    <span className="w-0 border-l border-dotted border-[#aaa]" />
  </span>
);

interface ToolProps {
  name: string;
}

/*
 * Tool names carry their state as a prefix or suffix:
 *   "-name" disabled, "name+" with a menu arrow, "name." with a corner arrow, "*name" pressed, "|" a separator
 */
const Tool = ({ name }: ToolProps) => {
  if (name === '|') return <span className="ml-[2px] mr-[3px] h-6 w-px shrink-0 bg-[#d4d4d4]" />;
  const disabled = name.startsWith('-');
  const pressed = name.startsWith('*');
  const key = name.replace(/[^a-zA-Z]/g, '');
  return (
    <>
      <button
        type="button"
        aria-label={key}
        disabled={disabled}
        className={`relative flex h-[31px] w-[33px] shrink-0 items-center justify-center ${
          pressed ? 'rounded-sm border border-[#b0b0b0] bg-[#dcdcdc]' : ''
        }`}
      >
        <Icon name={key} className={disabled ? 'size-6 opacity-45 grayscale-70' : 'size-6'} />
        {name.endsWith('.') && (
          <span className="absolute bottom-1 right-1 flex">
            <Caret className="text-[#999]" />
          </span>
        )}
      </button>
      {name.endsWith('+') && (
        <button
          type="button"
          aria-label={`${key} menu`}
          disabled={disabled}
          className="flex h-[31px] w-3 shrink-0 items-center justify-center"
        >
          <Caret className={disabled ? 'text-[#999]' : 'text-[#555]'} />
        </button>
      )}
    </>
  );
};

const ToolGroup = ({ tools, className = 'ml-1', children }: { tools: string; className?: string; children?: ReactNode }) => (
  <div role="toolbar" className={`flex items-center ${className}`}>
    <Handle />
    {tools
      .split(' ')
      .filter(Boolean)
      .map((tool, i) => (
        <Tool key={i} name={tool} />
      ))}
    {children}
  </div>
);

const ToolRow = ({ children }: { children: ReactNode }) => (
  <div className="flex h-[39px] items-center border-b border-[#b4b4b4] bg-linear-to-b from-[#fbfbfb] to-[#efefef]">
    {children}
  </div>
);

const SpinArrows = () => (
  <span className="flex h-full w-[14px] shrink-0 flex-col items-center justify-center gap-[5px] border-l border-[#b4b4b4] text-[#666]">
    <svg viewBox="0 0 8 5" className="h-[5px] w-2" aria-hidden="true">
      <path d="M0 5h8L4 0z" fill="currentColor" />
    </svg>
    <svg viewBox="0 0 8 5" className="h-[5px] w-2" aria-hidden="true">
      <path d="M0 0h8L4 5z" fill="currentColor" />
    </svg>
  </span>
);

const menus = [
  '项目(J)',
  '编辑(E)',
  '视图(V)',
  '图层(L)',
  '设置(S)',
  '插件(P)',
  '矢量(O)',
  '栅格(R)',
  '数据库(D)',
  '网络(W)',
  '网孔(M)',
  '处理(C)',
  '帮助(H)',
];

const MenuBar = () => (
  <nav className="flex h-[22px] gap-px border-b border-[#cfcfcf] bg-[#f0f0f0] pl-1">
    {menus.map((menu) => (
      <button key={menu} type="button" className="px-[7px] text-xs leading-5">
        <Mnemonic label={menu} />
      </button>
    ))}
  </nav>
);

const Toolbars = () => (
  <div>
    <ToolRow>
      <ToolGroup className="" tools="newFile open save layout layoutManager style" />
      <ToolGroup tools="*hand pan zoomIn zoomOut zoomFull zoomSelection zoomLayer -zoomNative zoomLast -zoomNext mapView bookmarkNew bookmarks refresh" />
      <ToolGroup tools="identify -action+ select+ selectForm+ deselect table abacus gear sigma ruler+ tip annotation+" />
    </ToolRow>
    <ToolRow>
      <ToolGroup className="" tools="addLayer geopackage newShape newSpatialite newMemory | newVirtual" />
      <ToolGroup tools="-pencils. pencil -saveEdits -addFeature -vertex+ -multiEdit -trash -cut -copy -paste -undo -redo" />
      <ToolGroup tools="label diagram | labelPin labelRed | -labelPinOff -labelShow -labelMove -labelRotate -labelChange" />
      <ToolGroup className="ml-7" tools="database" />
      <ToolGroup tools="metasearch" />
      <ToolGroup tools="python" />
      <ToolGroup tools="help" />
      <ToolGroup className="ml-7" tools="" />
    </ToolRow>
    <ToolRow>
      <ToolGroup
        className=""
        tools="-triangle -moveFeature+ -rotateFeature -simplify -addRing -addPart -fillRing -deleteRing -deletePart -reshape -offset -offsetCurve -split -splitParts -splitParts -merge -mergeAttributes -rotateSymbol+"
      />
      <ToolGroup tools="-histogram -histogramStretch -histogram -histogramStretch -brighten -darken -contrastUp -contrastDown" />
      <ToolGroup className="ml-[412px]" tools="magnet -snapVertex. -snapPoints.">
        <label className="flex h-5 w-21 overflow-hidden rounded-xs border border-[#a9a9a9] bg-[#f0f0f0]">
          <input aria-label="容差" defaultValue="12" disabled className="w-0 flex-1 px-1 text-xs text-[#777]" />
          <span className="flex opacity-60">
            <SpinArrows />
          </span>
        </label>
        <label className="relative ml-px flex h-[21px] w-[65px] items-center rounded-xs border border-[#bdbdbd]">
          <select aria-label="单位" disabled className="w-full appearance-none px-1 text-xs text-[#777]">
            <option>像素</option>
          </select>
          <span className="absolute right-[7px] flex">
            <Caret className="text-[#999]" />
          </span>
        </label>
        <Tool name="topology" />
        <Tool name="-intersection" />
        <Tool name="-tracing+" />
      </ToolGroup>
    </ToolRow>
    <div className="flex h-[38px] items-center border-b border-[#b4b4b4] bg-linear-to-b from-[#fbfbfb] to-[#efefef]">
      <ToolGroup className="" tools="-curve+ -circleShape+ -ellipseShape+ -rectShape+ -polygonShape+" />
      <ToolGroup tools="searchGreen osm" />
    </div>
  </div>
);

const sources = [
  'dsVector',
  'dsRaster',
  'dsMesh',
  'dsText',
  'dsSpatialite',
  'dsVirtual',
  'dsPostgres+',
  'dsWms+',
  'dsWcs',
  'dsWfs+',
  'newMemory+',
];

const SourceBar = () => (
  <div className="flex w-[51px] shrink-0 flex-col bg-linear-to-r from-[#fbfbfb] to-[#ededed] pt-[6px]">
    <span className="mb-[3px] ml-[19px] flex w-4 flex-col gap-[2px]">
      <span className="border-t border-dotted border-[#aaa]" />
      <span className="border-t border-dotted border-[#aaa]" />
    </span>
    {sources.map((source) => (
      <div key={source} className="flex h-8 items-center pl-[3px]">
        <Tool name={source} />
      </div>
    ))}
  </div>
);

/* ---------- docks ---------- */

const DockTitle = ({ title }: { title: string }) => (
  <div className="flex h-5 items-center gap-[3px] pl-1 pr-[2px]">
    <h2 className="flex-1 text-xs">{title}</h2>
    <button type="button" aria-label="浮动" className="flex size-[11px] items-center justify-center">
      <svg viewBox="0 0 11 11" className="size-[11px] overflow-visible" aria-hidden="true">
        <rect x="0" y="0" width="11" height="11" rx="2" fill="none" stroke="#666" />
        <rect x="4.5" y="2.5" width="4" height="4" fill="none" stroke="#666" />
        <rect x="2.5" y="4.5" width="4" height="4" fill="#f0f0f0" stroke="#666" />
      </svg>
    </button>
    <button type="button" aria-label="关闭" className="flex size-[11px] items-center justify-center">
      <svg viewBox="0 0 11 11" className="size-[11px] overflow-visible" aria-hidden="true">
        <rect x="0" y="0" width="11" height="11" rx="2" fill="none" stroke="#666" />
        <path d="M3 3l5 5M8 3L3 8" stroke="#444" strokeWidth="2.2" />
      </svg>
    </button>
  </div>
);

const DockTools = ({ tools }: { tools: string[] }) => (
  <div className="flex h-[30px] items-center pb-[2px] pl-[3px]">
    {tools.map((tool) => (
      <span key={tool} className="flex">
        <button type="button" aria-label={tool} className="flex h-6 w-[25px] items-center justify-center">
          <Icon name={tool} className="size-[15px]" />
        </button>
        {tool === 'epsilon' && (
          <button type="button" aria-label="epsilon menu" className="flex h-6 w-3 items-center justify-center">
            <Caret />
          </button>
        )}
      </span>
    ))}
  </div>
);

type NodeKind = 'raster' | 'vector' | 'selected' | 'folder' | 'zip';

const nodes: { kind: NodeKind; label: string }[] = [
  { kind: 'raster', label: 'county10.pdf' },
  { kind: 'vector', label: 'county10.pdf' },
  { kind: 'vector', label: 'county10.shp' },
  { kind: 'folder', label: 'HI_Wetlands.shp' },
  { kind: 'vector', label: 'HI_Wetlands_Historic_Map_Info' },
  { kind: 'vector', label: 'HI_Wetlands_Linear.shp' },
  { kind: 'vector', label: 'HI_Wetlands_Metadata.shp' },
  { kind: 'selected', label: 'HI_Wetlands_Poly.shp' },
  { kind: 'raster', label: 'HI_Wetlands_Shapefile.pdf' },
  { kind: 'vector', label: 'HI_Wetlands_Shapefile.pdf' },
  { kind: 'raster', label: 'WetlandsDeepwaterHabitatsCla' },
  { kind: 'vector', label: 'WetlandsDeepwaterHabitatsCla' },
  { kind: 'zip', label: 'county10.shp.zip' },
  { kind: 'zip', label: 'HI_Wetlands.shp.zip' },
];

const NodeIcon = ({ kind }: { kind: NodeKind }) => {
  if (kind === 'raster') {
    return (
      <svg viewBox="0 0 16 14" className="h-[14px] w-4 shrink-0" aria-hidden="true">
        <rect x="2" y="1" width="13" height="12" fill="#a9bedb" />
        <path d="M2 1h4v4H2zM10 1h5v3h-5zM6 5h4v4H6zM2 9h4v4H2zM11 9h4v4h-4z" fill="#2c3f5c" />
      </svg>
    );
  }
  if (kind === 'folder') {
    return (
      <svg viewBox="0 0 14 14" className="size-[14px] shrink-0" aria-hidden="true">
        <path d="M0 0h6l1 2h7v3H0z" fill="#888" />
        <path d="M1 13V5h4l2 2h6v6z" fill="#f4f4f4" stroke="#888" />
      </svg>
    );
  }
  if (kind === 'zip') {
    return (
      <svg viewBox="0 0 14 14" className="size-[14px] shrink-0" aria-hidden="true">
        <rect x=".5" y=".5" width="13" height="13" fill="#f0f0f0" stroke="#777" />
        <path d="M7 1v8" stroke="#555" strokeWidth="3" strokeDasharray="1 1" />
        <rect x="5.5" y="8.5" width="3" height="4" fill="#fff" stroke="#444" />
      </svg>
    );
  }
  return (
    <svg viewBox="0 0 16 12" className="mb-[2px] h-3 w-4 shrink-0" aria-hidden="true">
      <path
        d="M1 3q3-3 7 0 4-1 7-2c1 3-1 4 0 8-1 2-3 2-5 0-3-1-4 0-6 2-3 0-3-2-3-3q2-2 0-5z"
        fill={kind === 'selected' ? '#6cb0ea' : '#e3e9f1'}
        stroke={kind === 'selected' ? '#3a73a8' : '#66758a'}
      />
    </svg>
  );
};

const TreeNode = ({ kind, label }: { kind: NodeKind; label: string }) => {
  const parent = kind === 'folder' || kind === 'zip';
  return (
    <li
      className={`flex h-[19px] shrink-0 items-center ${kind === 'selected' ? 'bg-[#efefef]' : ''} ${
        parent ? 'gap-[7px] pl-[85px]' : 'gap-[6px] pl-[123px]'
      }`}
    >
      {parent && (
        <span className="flex w-3 shrink-0 text-[#555]">
          <svg viewBox="0 0 8 8" className="size-2" aria-hidden="true">
            <path d={kind === 'folder' ? 'M0 2h8L4 6z' : 'M2 0v8l4-4z'} fill="currentColor" />
          </svg>
        </span>
      )}
      <NodeIcon kind={kind} />
      <span className="whitespace-nowrap">{label}</span>
    </li>
  );
};

const arrows = {
  up: 'M0 6h8L4 2z',
  down: 'M0 2h8L4 6z',
  left: 'M6 0v8L2 4z',
  right: 'M2 0v8l4-4z',
};

const ScrollButton = ({ dir, className }: { dir: keyof typeof arrows; className: string }) => (
  <button
    type="button"
    aria-label={dir}
    className={`flex shrink-0 items-center justify-center border-[#b4b4b4] bg-[#fafafa] ${className}`}
  >
    <svg viewBox="0 0 8 8" className="size-2 text-[#555]" aria-hidden="true">
      <path d={arrows[dir]} fill="currentColor" />
    </svg>
  </button>
);

const BrowserDock = () => (
  <section>
    <DockTitle title="浏览" />
    <DockTools tools={['addSmall', 'refresh', 'filter', 'collapse', 'info']} />
    <div className="flex h-[276px] flex-col border border-[#b4b4b4] bg-white">
      <div className="flex min-h-0 flex-1">
        <ul className="flex min-w-0 flex-1 flex-col overflow-hidden text-xs">
          {nodes.map((node, i) => (
            <TreeNode key={i} {...node} />
          ))}
        </ul>
        <div className="flex w-[14px] shrink-0 flex-col border-l border-[#b4b4b4] bg-[#e6e6e6]">
          <ScrollButton dir="up" className="h-[14px] border-b" />
          <span className="mt-[37px] h-8 border-y border-[#b4b4b4] bg-[#fbfbfb]" />
          <ScrollButton dir="down" className="mt-auto h-[14px] border-t" />
        </div>
      </div>
      <div className="flex h-[14px] shrink-0 border-t border-[#b4b4b4] bg-[#e6e6e6]">
        <ScrollButton dir="left" className="w-[14px] border-r" />
        <span className="w-1/2 border-r border-[#b4b4b4] bg-[#fbfbfb]" />
        <ScrollButton dir="right" className="ml-auto w-[15px] border-x" />
        <span className="w-[13px] bg-[#f0f0f0]" />
      </div>
    </div>
  </section>
);

const CheckBox = ({ label, checked = false }: { label: string; checked?: boolean }) => (
  <span className="relative flex size-[14px] shrink-0">
    <input
      type="checkbox"
      aria-label={label}
      defaultChecked={checked}
      className="peer size-[14px] appearance-none border border-[#b9b9b9] bg-white"
    />
    <svg
      viewBox="0 0 14 14"
      className="pointer-events-none absolute inset-0 hidden size-[14px] peer-checked:block"
      aria-hidden="true"
    >
      <path d="M3.5 7l2.5 3.5L10.5 3" fill="none" stroke="#000" strokeWidth="2" />
    </svg>
  </span>
);

const LayersDock = () => (
  <section className="flex flex-1 flex-col">
    <DockTitle title="图层" />
    <DockTools tools={['brush', 'addGroup', 'eye', 'filter', 'epsilon', 'expand', 'collapse', 'removeLayer']} />
    <ul className="flex-1 border border-[#b4b4b4] bg-white text-xs font-bold">
      <li className="flex h-[19px] items-center gap-[6px] pl-[23px] pr-px">
        <CheckBox label="county10" checked />
        <span className="size-4 border border-[#888] bg-white" />
        <span className="flex-1">county10</span>
        <span className="h-[17px] w-[9px] bg-[#e2e2e2]" />
      </li>
      <li className="flex h-[19px] items-center gap-[6px] bg-[#0078d7] pl-[23px] pr-px text-white">
        <CheckBox label="HI_Wetlands_Poly" checked />
        <span className="size-4 border border-[#62a8dc] bg-[#7ac0ea]" />
        <span className="flex-1 underline underline-offset-2">HI_Wetlands_Poly</span>
        <span className="h-[17px] w-[9px] bg-[#e2e2e2]" />
      </li>
    </ul>
  </section>
);

/* ---------- layer context menu ---------- */

interface MenuEntry {
  label: string;
  icon?: string;
  disabled?: boolean;
  checkbox?: boolean;
  submenu?: boolean;
  active?: boolean;
}

const contextMenu: MenuEntry[][] = [
  [
    { label: '缩放到图层范围(Z)', icon: 'zoomLayer' },
    { label: '缩放到选中的区域(Z)', icon: 'zoomLayer', disabled: true },
    { label: '在鹰眼图中显示(S)', icon: 'glasses' },
    { label: '显示要素数目', checkbox: true },
    { label: '复制图层' },
    { label: '图层重命名(N)' },
  ],
  [
    { label: '创建图层副本(D)', icon: 'duplicate' },
    { label: '移除图层(R)...', icon: 'removeLayer' },
  ],
  [{ label: '移到顶层(T)' }],
  [
    { label: '打开属性表(O)', icon: 'table' },
    { label: '切换编辑状态', icon: 'pencil' },
    { label: '过滤(F)...' },
    { label: 'Change Data Source...' },
  ],
  [{ label: '设置图层可见比例(S)' }, { label: '设置坐标参照系', submenu: true }],
  [{ label: '导出', submenu: true }],
  [
    { label: '样式', submenu: true },
    { label: '属性...(P)', active: true },
  ],
];

const ContextMenu = () => (
  <div
    role="menu"
    className="absolute left-[191px] top-[587px] z-10 w-[226px] border border-[#a0a0a0] bg-white text-xs shadow-[4px_4px_3px_-1px_#00000070]"
  >
    {contextMenu.map((group, i) => (
      <div key={i}>
        {i > 0 && <div className="mx-1 mb-px h-px bg-[#bdbdbd]" />}
        {group.map((entry) => (
          <div
            key={entry.label}
            role="menuitem"
            className={`flex h-[25px] items-center pr-[3px] ${entry.active ? 'bg-[#0078d7] text-white' : ''} ${
              entry.disabled ? 'text-[#7d7d7d]' : ''
            }`}
          >
            <span className="flex w-[27px] justify-center pl-px">
              {entry.icon && (
                <Icon name={entry.icon} className={entry.disabled ? 'size-[15px] opacity-35 grayscale' : 'size-[15px]'} />
              )}
              {entry.checkbox && <CheckBox label={entry.label} />}
            </span>
            <span className="flex-1">
              <Mnemonic label={entry.label} />
            </span>
            {entry.submenu && (
              <svg viewBox="0 0 8 8" className="size-2 text-[#555]" aria-hidden="true">
                <path d={arrows.right} fill="currentColor" />
              </svg>
            )}
          </div>
        ))}
      </div>
    ))}
  </div>
);

/* ---------- map and status bar ---------- */

const MapCanvas = () => (
  <main className="relative mt-px min-w-0 flex-1 border border-[#b4b4b4] bg-white">
    <svg viewBox="0 0 34 26" className="absolute left-[881px] top-[313px] h-[26px] w-[34px]" aria-hidden="true">
      <path
        d="M1 11l3 1h4L10 5l3-3 3 2 2 6 4 4 5 1 4 5-1 4-5 1-4-4-3-3-5-3-5-3"
        fill="#fff"
        stroke="#4d6472"
        strokeWidth="1.2"
      />
      <path d="M13 11l2 2v5l-2-1z" fill="#666" />
      <path d="M28 18l3 2v3l-3 1-1-2z" fill="#3b86c8" />
      <path d="M31 19l1 3M24 14l3-1 1 3" stroke="#333" fill="none" />
    </svg>
  </main>
);

const MONO = "font-['Liberation_Mono','Noto_Sans_CJK_SC',monospace] text-[10px]";

const StatusBar = () => (
  <footer className="relative flex h-7 shrink-0 items-center bg-[#f0f0f0] pl-1 pr-2 text-[11px]">
    <label className="flex h-[22px] w-50 items-center rounded-xs border border-[#a9a9a9] bg-white pl-2">
      <svg viewBox="0 0 14 14" className="size-3" aria-hidden="true">
        <circle cx="5.5" cy="5.5" r="4.5" fill="none" stroke="#999" strokeWidth="1.6" />
        <path d="M9 9l4.5 4.5" stroke="#999" strokeWidth="2" />
      </svg>
      <input
        aria-label="定位"
        placeholder="键入以定位(Ctrl+K)"
        className="ml-2 w-0 flex-1 text-xs outline-none placeholder:text-[#808080]"
      />
    </label>
    <span className="ml-2">切换当前图层的编辑状态</span>

    <label htmlFor="coord" className="ml-auto">
      坐标
    </label>
    <input
      id="coord"
      defaultValue="357111,2211065"
      className={`ml-1 h-[22px] w-[106px] rounded-xs border border-[#a9a9a9] bg-white text-center ${MONO}`}
    />
    <button type="button" aria-label="范围" className="ml-1 flex w-4 justify-center">
      <Icon name="extents" className="size-4" />
    </button>
    <label htmlFor="scale" className="ml-[14px]">
      比例尺
    </label>
    <span className="relative ml-[2px] flex h-[22px] w-[83px] items-center rounded-xs border border-[#a9a9a9] bg-white">
      <select id="scale" className={`h-full w-full appearance-none pl-1 ${MONO}`}>
        <option>1:1512548</option>
      </select>
      <span className="pointer-events-none absolute inset-y-0 right-0 flex w-5 items-center justify-center border-l border-[#b4b4b4] bg-[#f4f4f4]">
        <Caret />
      </span>
    </span>
    <button type="button" aria-label="锁定比例" className="ml-3 flex">
      <Icon name="lock" className="size-[14px]" />
    </button>
    <label htmlFor="magnifier" className="ml-2">
      放大镜
    </label>
    <span className="ml-[2px] flex h-5 w-[92px] rounded-xs border border-[#a9a9a9] bg-white">
      <input id="magnifier" defaultValue="100%" className={`w-0 flex-1 pl-1 ${MONO}`} />
      <SpinArrows />
    </span>
    <label htmlFor="rotation" className="ml-[10px]">
      旋转角度
    </label>
    <span className="ml-2 flex h-5 w-[88px] rounded-xs border border-[#a9a9a9] bg-white">
      <input id="rotation" defaultValue="0.0°" className={`w-0 flex-1 pl-1 ${MONO}`} />
      <SpinArrows />
    </span>
    <span className="ml-2 flex items-center gap-[6px]">
      <CheckBox label="渲染" checked />
      <span>渲染</span>
    </span>
    <button type="button" className={`ml-[18px] flex items-center gap-1 ${MONO}`}>
      <Icon name="globeGray" className="size-[14px]" />
      EPSG:26904
    </button>
    <button type="button" aria-label="消息" className="ml-6 flex">
      <Icon name="chat" className="size-4" />
    </button>
    <span className="pointer-events-none absolute right-[13px] top-0 whitespace-nowrap font-['Liberation_Sans',sans-serif] text-base leading-5 text-white/70 [text-shadow:0_0_2px_#0003]">
      https://blog.csdn.net/QGISClass
    </span>
  </footer>
);

export default function App() {
  return (
    <div className="relative flex min-h-screen flex-col bg-[#f0f0f0] font-['Noto_Sans','Noto_Sans_CJK_SC',sans-serif] text-black">
      <MenuBar />
      <Toolbars />
      <div className="flex flex-1">
        <SourceBar />
        <div className="mr-[6px] flex w-[341px] shrink-0 flex-col border-l border-[#b4b4b4] pt-px">
          <BrowserDock />
          <div className="flex h-[7px] items-center justify-center">
            <span className="w-4 border-t border-dotted border-[#aaa]" />
          </div>
          <LayersDock />
        </div>
        <MapCanvas />
      </div>
      <StatusBar />
      <ContextMenu />
    </div>
  );
}
